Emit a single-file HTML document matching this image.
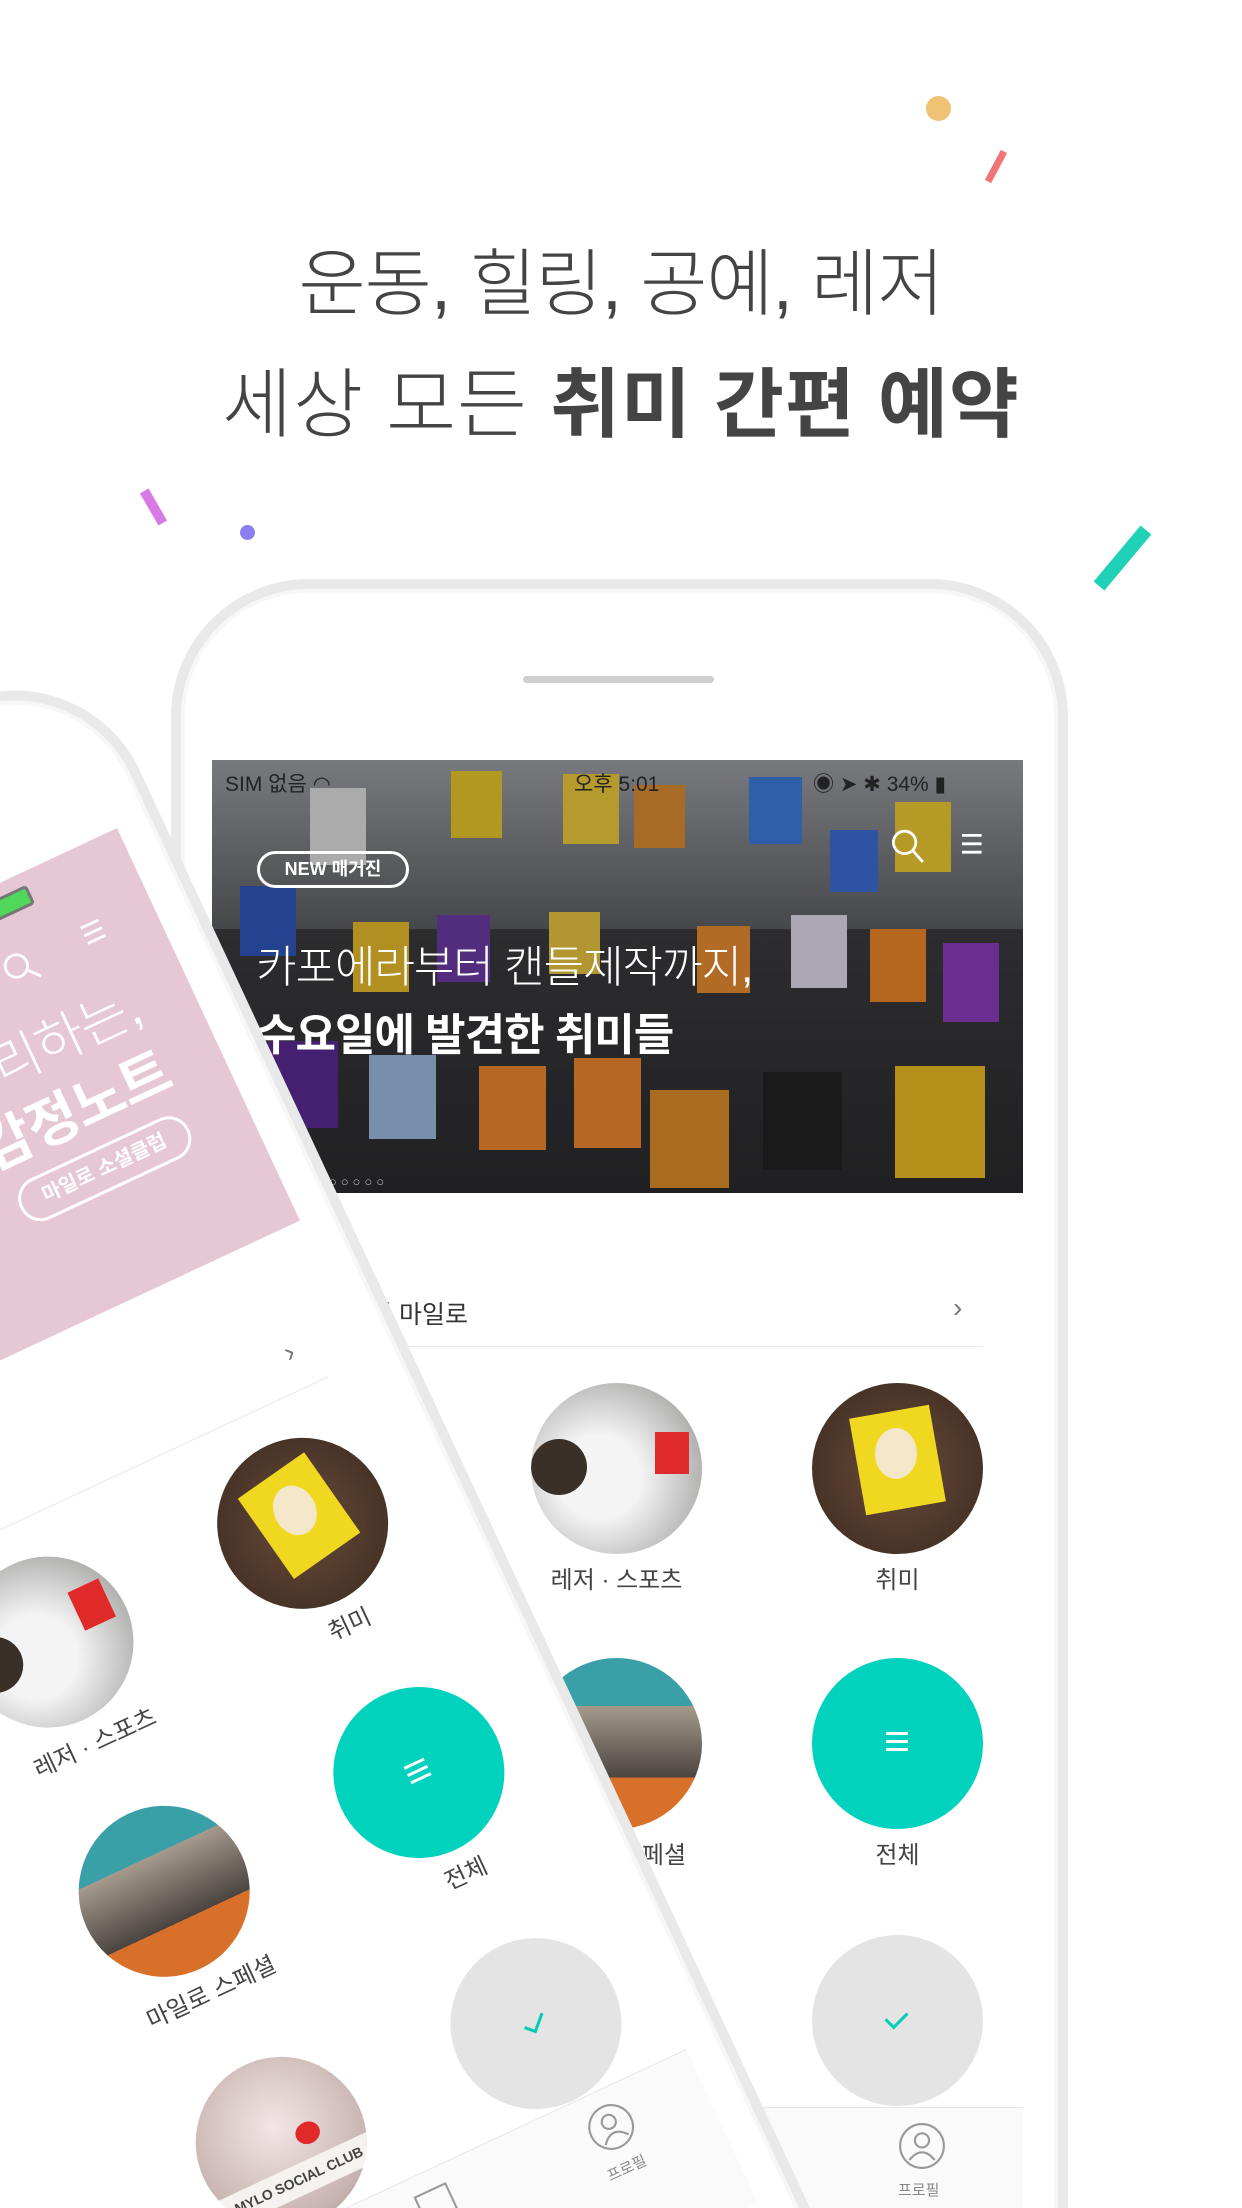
<!DOCTYPE html>
<html style="width:1242px;height:2208px;overflow:hidden;"><head><meta charset="utf-8">
<style>
html,body{margin:0;padding:0;background:#fff;}
body{width:1242px;height:2208px;overflow:hidden;position:relative;font-family:"Liberation Sans","Noto Sans CJK KR",sans-serif;}
#wrap{position:absolute;left:0;top:0;width:1242px;height:2208px;overflow:hidden;}
.abs{position:absolute;}
.title{position:absolute;left:0;width:1242px;text-align:center;color:#444;font-family:"Liberation Sans","Noto Sans CJK KR",sans-serif;font-size:73px;letter-spacing:-1px;white-space:nowrap;}
.ph{position:absolute;left:0;top:0;width:1242px;height:2208px;}
.frame{position:absolute;left:171px;top:579px;width:877px;height:1967px;border:10px solid #e9e9e9;border-radius:138px;background:#fff;box-shadow:inset 0 0 0 4px #f7f7f7;}
.spk{position:absolute;left:523px;top:676px;width:191px;height:7px;border-radius:4px;background:#cfcfcf;}
.circ{position:absolute;width:171px;height:171px;border-radius:50%;overflow:hidden;}
.lbl{position:absolute;width:281px;text-align:center;font-size:24px;color:#444;}
.tab{position:absolute;left:212px;top:2107px;width:811px;height:169px;background:#fafafa;border-top:1px solid #e6e6e6;}
.sep{position:absolute;left:212px;top:1346px;width:771px;height:1px;background:#e8e8e8;}
</style></head><body><div id="wrap">

<!-- confetti -->
<div class="abs" style="left:926px;top:96px;width:25px;height:25px;border-radius:50%;background:#f0c274;"></div>
<div class="abs" style="left:979px;top:163px;width:34px;height:7px;background:#f37474;transform:rotate(-62deg);"></div>
<div class="abs" style="left:135px;top:502px;width:37px;height:10px;background:#d77ae6;transform:rotate(60deg);"></div>
<div class="abs" style="left:240px;top:525px;width:15px;height:15px;border-radius:50%;background:#8a7ff0;"></div>
<div class="abs" style="left:1086px;top:551px;width:73px;height:14px;background:#1fd1b6;transform:rotate(-50deg);"></div>

<div class="title" style="top:225px;font-weight:300;">운동, 힐링, 공예, 레저</div>
<div class="title" style="top:343px;font-weight:300;font-size:76px;letter-spacing:1px;">세상 모든 <b style="font-weight:700;">취미 간편 예약</b></div>

<!-- RIGHT PHONE -->
<div class="ph">
  <div class="frame"></div>
  <div class="spk"></div>
  <div class="abs" style="left:212px;top:760px;width:811px;height:433px;overflow:hidden;background:linear-gradient(180deg,#5a5c62 0%,#3a3a3e 40%,#2a2a2c 100%);">
    <div class="abs" style="left:0;top:0;width:811px;height:169px;background:linear-gradient(180deg,#9a9ca2,#5a5c60);"></div>
    <div class="abs" style="left:239px;top:11px;width:51px;height:67px;background:#e4c22a;"></div>
    <div class="abs" style="left:351px;top:14px;width:56px;height:70px;background:#e8c63a;"></div>
    <div class="abs" style="left:422px;top:25px;width:51px;height:63px;background:#d88a30;"></div>
    <div class="abs" style="left:537px;top:17px;width:53px;height:67px;background:#3c7ad8;"></div>
    <div class="abs" style="left:618px;top:70px;width:48px;height:62px;background:#3a6bd0;"></div>
    <div class="abs" style="left:683px;top:42px;width:56px;height:70px;background:#e8c630;"></div>
    <div class="abs" style="left:98px;top:28px;width:56px;height:77px;background:#dcdcdc;"></div>
    <div class="abs" style="left:28px;top:126px;width:56px;height:70px;background:#2f55b8;"></div>
    <div class="abs" style="left:141px;top:162px;width:56px;height:70px;background:#e3b82a;"></div>
    <div class="abs" style="left:225px;top:155px;width:53px;height:67px;background:#6a3aa0;"></div>
    <div class="abs" style="left:337px;top:152px;width:51px;height:62px;background:#e4c040;"></div>
    <div class="abs" style="left:485px;top:166px;width:53px;height:67px;background:#e58a30;"></div>
    <div class="abs" style="left:579px;top:155px;width:56px;height:73px;background:#dcd6e6;"></div>
    <div class="abs" style="left:658px;top:169px;width:56px;height:73px;background:#e8842a;"></div>
    <div class="abs" style="left:731px;top:183px;width:56px;height:79px;background:#8a3ab8;"></div>
    <div class="abs" style="left:56px;top:281px;width:70px;height:87px;background:#5a2a90;"></div>
    <div class="abs" style="left:157px;top:295px;width:67px;height:84px;background:#9ab8dc;"></div>
    <div class="abs" style="left:267px;top:306px;width:67px;height:84px;background:#e8852e;"></div>
    <div class="abs" style="left:362px;top:298px;width:67px;height:90px;background:#e8852e;"></div>
    <div class="abs" style="left:438px;top:330px;width:79px;height:98px;background:#d88a2a;"></div>
    <div class="abs" style="left:551px;top:312px;width:79px;height:98px;background:#222;"></div>
    <div class="abs" style="left:683px;top:306px;width:90px;height:112px;background:#e8b820;"></div>
    <div class="abs" style="left:0;top:0;width:811px;height:433px;background:rgba(0,0,0,0.22);"></div>
    <div class="abs" style="left:13px;top:8px;font-size:21px;color:#222;">SIM 없음 ◠</div>
    <div class="abs" style="left:362px;top:8px;font-size:21px;color:#222;">오후 5:01</div>
    <div class="abs" style="left:601px;top:8px;font-size:21px;color:#222;">◉ ➤ ✱ 34% ▮</div>
    <svg class="abs" style="left:680px;top:67px;" width="112" height="42" viewBox="0 0 80 30"><circle cx="9" cy="11" r="8" fill="none" stroke="#fff" stroke-width="2"/><line x1="15" y1="17" x2="22" y2="25" stroke="#fff" stroke-width="2"/><line x1="50" y1="6" x2="64" y2="6" stroke="#fff" stroke-width="2"/><line x1="50" y1="12" x2="64" y2="12" stroke="#fff" stroke-width="2"/><line x1="50" y1="18" x2="64" y2="18" stroke="#fff" stroke-width="2"/></svg>
    <div class="abs" style="left:45px;top:91px;width:146px;height:31px;border:3px solid #fff;border-radius:20px;color:#fff;font-size:18px;font-weight:700;text-align:center;line-height:31px;">NEW 매거진</div>
    <div class="abs" style="left:44px;top:171px;font-size:44px;color:#fff;font-weight:300;letter-spacing:-1px;white-space:nowrap;">카포에라부터 캔들제작까지,</div>
    <div class="abs" style="left:44px;top:239px;font-size:44px;color:#fff;font-weight:700;letter-spacing:-1px;white-space:nowrap;">수요일에 발견한 취미들</div>
    <div class="abs" style="left:105px;top:414px;font-size:13px;color:#bbb;letter-spacing:4px;">○○○○○○</div>
  </div>
  <div class="abs" style="left:323px;top:1295px;font-size:25px;color:#333;">오늘의 마일로</div>
  <div class="abs" style="left:953px;top:1292px;font-size:28px;color:#777;">›</div>
  <div class="sep"></div>
  <div class="circ" style="left:531px;top:1383px;background:radial-gradient(circle at 40% 55%,#f4f4f4 0 30%,#c8c8c8 60%,#8c8a84 100%);"><div class="abs" style="left:124px;top:49px;width:34px;height:42px;background:#e02a2a;"></div><div class="abs" style="left:0;top:56px;width:56px;height:56px;border-radius:50%;background:#3a3028;"></div></div>
  <div class="lbl" style="left:476px;top:1560px;">레저 · 스포츠</div>
  <div class="circ" style="left:812px;top:1383px;background:radial-gradient(circle at 50% 50%,#6a4a38,#3a2a20);"><div class="abs" style="left:45px;top:28px;width:81px;height:98px;background:#f0d820;transform:rotate(-10deg);"></div><div class="abs" style="left:63px;top:45px;width:42px;height:51px;border-radius:50%;background:#f4e6c8;"></div></div>
  <div class="lbl" style="left:757px;top:1560px;">취미</div>
  <div class="circ" style="left:531px;top:1658px;background:linear-gradient(180deg,#3aa0a8 0 28%,#a59a8c 28%,#4a4440 70%,#d8702a 70%);"></div>
  <div class="lbl" style="left:476px;top:1835px;">마일로 스페셜</div>
  <div class="circ" style="left:812px;top:1658px;background:#00d2bd;"><div class="abs" style="left:74px;top:74px;width:22px;height:3px;background:#fff;box-shadow:0 8px 0 #fff,0 16px 0 #fff;"></div></div>
  <div class="lbl" style="left:757px;top:1835px;">전체</div>
  <div class="circ" style="left:812px;top:1935px;background:#e4e4e4;"><div class="abs" style="left:78px;top:72px;width:10px;height:18px;border-right:3px solid #00cdb5;border-bottom:3px solid #00cdb5;transform:rotate(45deg);"></div></div>
  <div class="tab"></div>
  <svg class="abs" style="left:898px;top:2122px;" width="48" height="48" viewBox="0 0 34 34"><circle cx="17" cy="17" r="15.5" fill="none" stroke="#999" stroke-width="1.5"/><circle cx="17" cy="13" r="5" fill="none" stroke="#999" stroke-width="1.5"/><path d="M8 27 Q17 16 26 27" fill="none" stroke="#999" stroke-width="1.5"/></svg>
  <div class="abs" style="left:898px;top:2179px;font-size:15px;color:#888;">프로필</div>
</div>

<!-- LEFT PHONE (rotated copy) -->
<div class="ph" style="transform:rotate(-25deg) translate(-1267px,40px);transform-origin:0 0;">
  <div class="frame"></div>
  <div class="spk"></div>
  <div class="abs" style="left:212px;top:760px;width:811px;height:433px;background:#e6c7d4;overflow:hidden;">
    <div class="abs" style="left:590px;top:8px;font-size:21px;color:#222;">34%</div>
    <div class="abs" style="left:660px;top:13px;width:39px;height:15px;border:3px solid #777;border-radius:4px;background:#4fd85a;"></div>
    <svg class="abs" style="left:649px;top:67px;" width="140" height="42" viewBox="0 0 100 30"><circle cx="9" cy="11" r="8" fill="none" stroke="#fff" stroke-width="2"/><line x1="15" y1="17" x2="22" y2="25" stroke="#fff" stroke-width="2"/><line x1="62" y1="6" x2="76" y2="6" stroke="#fff" stroke-width="2"/><line x1="62" y1="12" x2="76" y2="12" stroke="#fff" stroke-width="2"/><line x1="62" y1="18" x2="76" y2="18" stroke="#fff" stroke-width="2"/></svg>
    <div class="abs" style="right:56px;top:126px;font-size:53px;color:#fff;font-weight:300;letter-spacing:-1px;white-space:nowrap;">나를 정리하는,</div>
    <div class="abs" style="right:56px;top:194px;font-size:56px;color:#fff;font-weight:700;letter-spacing:-1px;white-space:nowrap;">마일로 감정노트</div>
    <div class="abs" style="right:62px;top:281px;width:180px;height:39px;border:3px solid #fff;border-radius:22px;color:#fff;font-size:20px;font-weight:700;text-align:center;line-height:39px;">마일로 소셜클럽</div>
  </div>
  <div class="abs" style="left:953px;top:1292px;font-size:28px;color:#777;">›</div>
  <div class="sep"></div>
  <div class="circ" style="left:531px;top:1383px;background:radial-gradient(circle at 40% 55%,#f4f4f4 0 30%,#c8c8c8 60%,#8c8a84 100%);"><div class="abs" style="left:124px;top:49px;width:34px;height:42px;background:#e02a2a;"></div><div class="abs" style="left:0;top:56px;width:56px;height:56px;border-radius:50%;background:#3a3028;"></div></div>
  <div class="lbl" style="left:476px;top:1560px;">레저 · 스포츠</div>
  <div class="circ" style="left:812px;top:1383px;background:radial-gradient(circle at 50% 50%,#6a4a38,#3a2a20);"><div class="abs" style="left:45px;top:28px;width:81px;height:98px;background:#f0d820;transform:rotate(-10deg);"></div><div class="abs" style="left:63px;top:45px;width:42px;height:51px;border-radius:50%;background:#f4e6c8;"></div></div>
  <div class="lbl" style="left:757px;top:1560px;">취미</div>
  <div class="circ" style="left:531px;top:1658px;background:linear-gradient(180deg,#3aa0a8 0 28%,#a59a8c 28%,#4a4440 70%,#d8702a 70%);"></div>
  <div class="lbl" style="left:476px;top:1835px;">마일로 스페셜</div>
  <div class="circ" style="left:812px;top:1658px;background:#00d2bd;"><div class="abs" style="left:74px;top:74px;width:22px;height:3px;background:#fff;box-shadow:0 8px 0 #fff,0 16px 0 #fff;"></div></div>
  <div class="lbl" style="left:757px;top:1835px;">전체</div>
  <div class="circ" style="left:531px;top:1935px;background:radial-gradient(circle at 50% 40%,#f2e6e6,#c8b4b0 70%,#9a8a88);"><div class="abs" style="left:0;top:112px;width:171px;height:31px;background:#f6f2f0;color:#444;font-size:14px;font-weight:700;text-align:center;line-height:31px;">MYLO SOCIAL CLUB</div><div class="abs" style="left:101px;top:77px;width:25px;height:22px;background:#e02a2a;border-radius:50%;"></div></div>
  <div class="circ" style="left:812px;top:1935px;background:#e4e4e4;"><div class="abs" style="left:78px;top:72px;width:10px;height:18px;border-right:3px solid #00cdb5;border-bottom:3px solid #00cdb5;transform:rotate(45deg);"></div></div>
  <div class="tab"></div>
  <svg class="abs" style="left:710px;top:2124px;" width="42" height="48" viewBox="0 0 30 34"><rect x="3" y="2" width="24" height="26" fill="none" stroke="#999" stroke-width="1.5"/><line x1="3" y1="31" x2="27" y2="31" stroke="#999" stroke-width="1.5"/></svg>
  <svg class="abs" style="left:898px;top:2122px;" width="48" height="48" viewBox="0 0 34 34"><circle cx="17" cy="17" r="15.5" fill="none" stroke="#999" stroke-width="1.5"/><circle cx="17" cy="13" r="5" fill="none" stroke="#999" stroke-width="1.5"/><path d="M8 27 Q17 16 26 27" fill="none" stroke="#999" stroke-width="1.5"/></svg>
  <div class="abs" style="left:898px;top:2179px;font-size:15px;color:#888;">프로필</div>
</div>

</div></body></html>
